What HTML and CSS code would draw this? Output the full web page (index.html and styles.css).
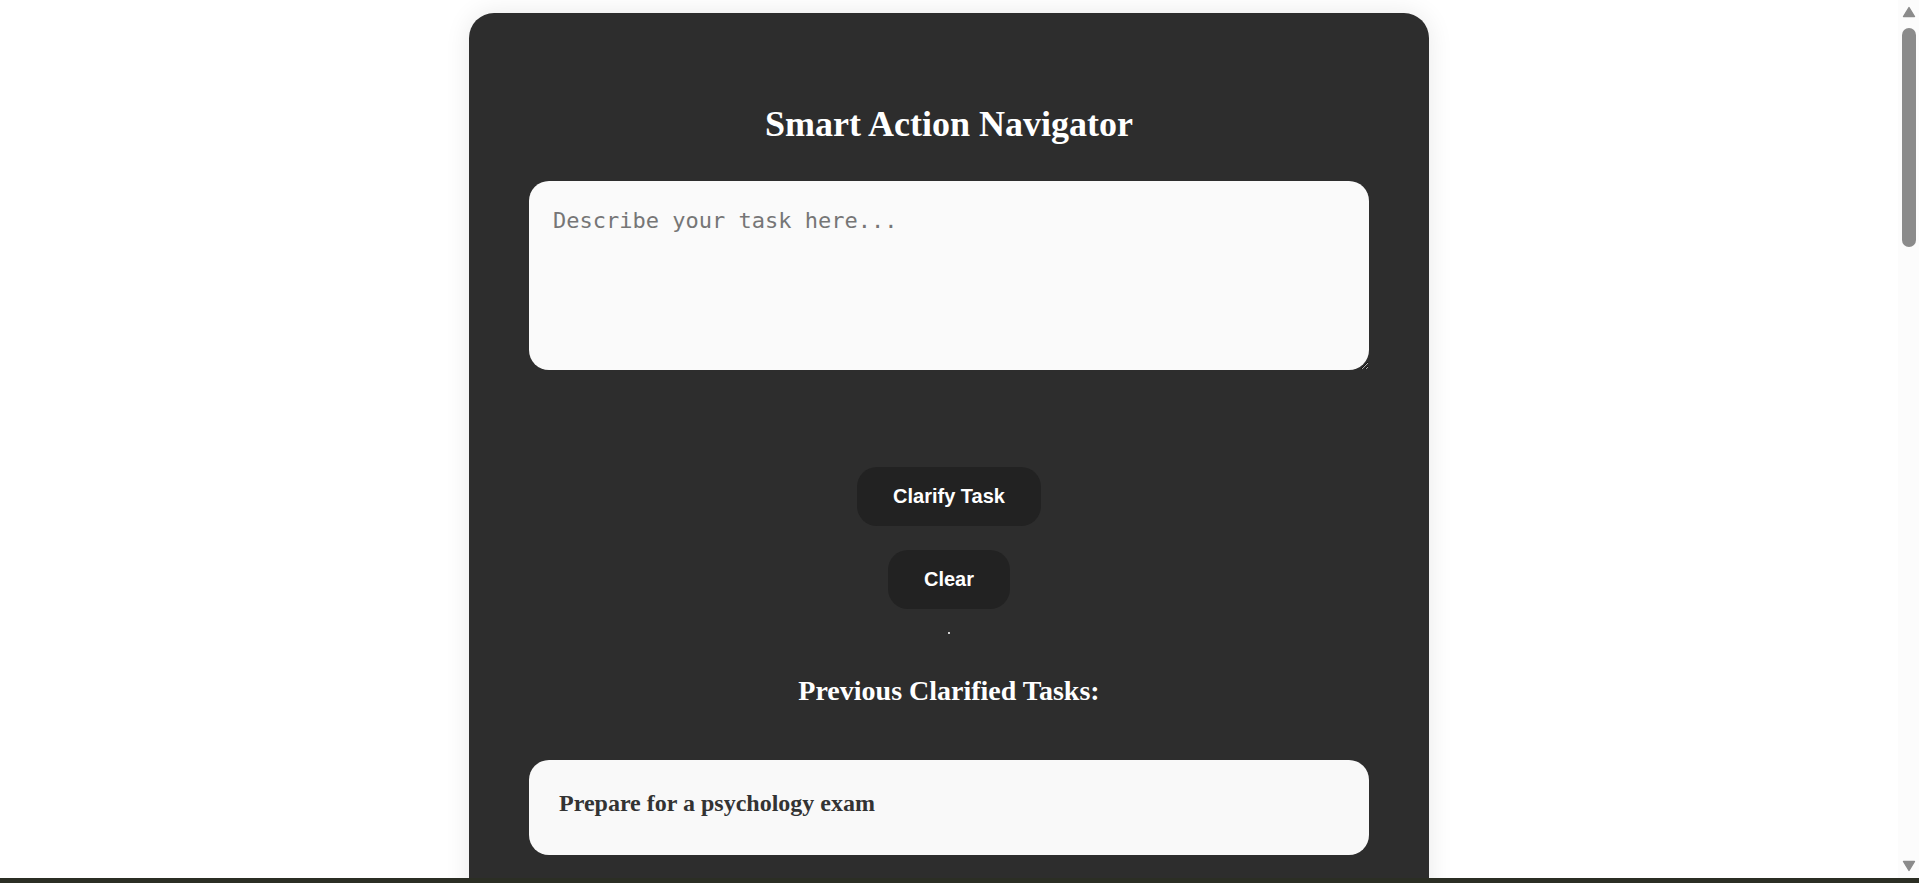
FILE: index.html
```html
<!DOCTYPE html>
<html lang="en">
<head>
<meta charset="utf-8">
<title>Smart Action Navigator</title>
<link rel="stylesheet" href="styles.css">
</head>
<body>
<div class="app">
  <div class="viewport">
    <div class="scroller">
      <main class="card">
        <h1 class="title">Smart Action Navigator</h1>
        <textarea class="task-input" placeholder="Describe your task here..."></textarea>
        <div class="actions">
          <button class="btn" type="button">Clarify Task</button>
          <button class="btn" type="button">Clear</button>
        </div>
        <div class="loader"></div>
        <h2 class="history-title">Previous Clarified Tasks:</h2>
        <ul class="history">
          <li class="history-item"><h3 class="history-text">Prepare for a psychology exam</h3></li>
        </ul>
      </main>
    </div>
    <div class="scrollbar" aria-hidden="true">
      <span class="sb-arrow sb-arrow-up">
        <svg width="14" height="12" viewBox="0 0 14 12"><path d="M1.5 10.5 L7 1.5 L12.5 10.5 Z" fill="#8b8b8b" stroke="#8b8b8b" stroke-width="1.4" stroke-linejoin="round"/></svg>
      </span>
      <div class="sb-track"><div class="sb-thumb"></div></div>
      <span class="sb-arrow sb-arrow-down">
        <svg width="14" height="12" viewBox="0 0 14 12"><path d="M1.5 1.5 L7 10.5 L12.5 1.5 Z" fill="#8b8b8b" stroke="#8b8b8b" stroke-width="1.4" stroke-linejoin="round"/></svg>
      </span>
    </div>
  </div>
  <div class="taskbar"></div>
</div>
</body>
</html>
```
FILE: styles.css
```css
html, body {
  margin: 0;
  height: 100%;
  overflow: hidden;
  background: #ffffff;
}

.app {
  display: flex;
  flex-direction: column;
  height: 100vh;
}

.viewport {
  display: flex;
  flex: 1;
  min-height: 0;
}

.scroller {
  flex: 1;
  min-width: 0;
  overflow: hidden;
  background: #ffffff;
}

.scrollbar {
  display: flex;
  flex-direction: column;
  width: 21px;
  flex-shrink: 0;
  background: #fcfcfc;
}

.sb-arrow {
  display: flex;
  justify-content: center;
  height: 24px;
  padding-left: 1px;
}

.sb-arrow-up {
  align-items: flex-end;
  padding-bottom: 6px;
  box-sizing: border-box;
}

.sb-arrow-down {
  align-items: flex-start;
  padding-top: 6px;
  box-sizing: border-box;
}

.sb-track {
  flex: 1;
  padding: 4px 3px 0 4px;
}

.sb-thumb {
  height: 219px;
  border-radius: 7px;
  background: #8b8b8b;
}

.taskbar {
  flex-shrink: 0;
  height: 5px;
  background: #2b2e24;
}

.card {
  box-sizing: border-box;
  width: 960px;
  min-height: 1200px;
  margin: 13px auto 40px;
  padding: 60px;
  background: #2d2d2d;
  border-radius: 25px;
  box-shadow: 0 0 26px rgba(0, 0, 0, 0.09);
  font-family: "Liberation Serif", "Times New Roman", serif;
}

.title {
  margin: 30px 0 36px;
  font-size: 36px;
  font-weight: bold;
  line-height: normal;
  text-align: center;
  color: #ffffff;
}

.task-input {
  display: block;
  box-sizing: border-box;
  width: 100%;
  height: 189px;
  margin: 0;
  padding: 27px 24px 25px;
  border: none;
  border-radius: 20px;
  background: #fafafa;
  font-family: "DejaVu Sans Mono", monospace;
  font-size: 22px;
  color: #333333;
  outline: none;
}

.task-input::placeholder {
  color: #767676;
}

.actions {
  display: flex;
  flex-direction: column;
  align-items: center;
  gap: 24px;
  margin-top: 97px;
}

.btn {
  padding: 18px 36px;
  border: none;
  border-radius: 20px;
  background: #222222;
  color: #ffffff;
  font-family: "Liberation Sans", Arial, sans-serif;
  font-size: 20px;
  font-weight: bold;
  line-height: 23px;
  cursor: pointer;
}

.loader {
  width: 2px;
  height: 2px;
  margin: 23px auto 0;
  background: #cfcfcf;
}

.history-title {
  margin: 41px 0 53px;
  font-size: 28px;
  font-weight: bold;
  line-height: normal;
  text-align: center;
  color: #ffffff;
}

.history {
  margin: 0;
  padding: 0;
  list-style: none;
}

.history-item {
  padding: 30px 30px 38px;
  border-radius: 20px;
  background: #f9f9f9;
}

.history-text {
  margin: 0;
  font-size: 24px;
  font-weight: bold;
  line-height: normal;
  color: #333333;
}
```
